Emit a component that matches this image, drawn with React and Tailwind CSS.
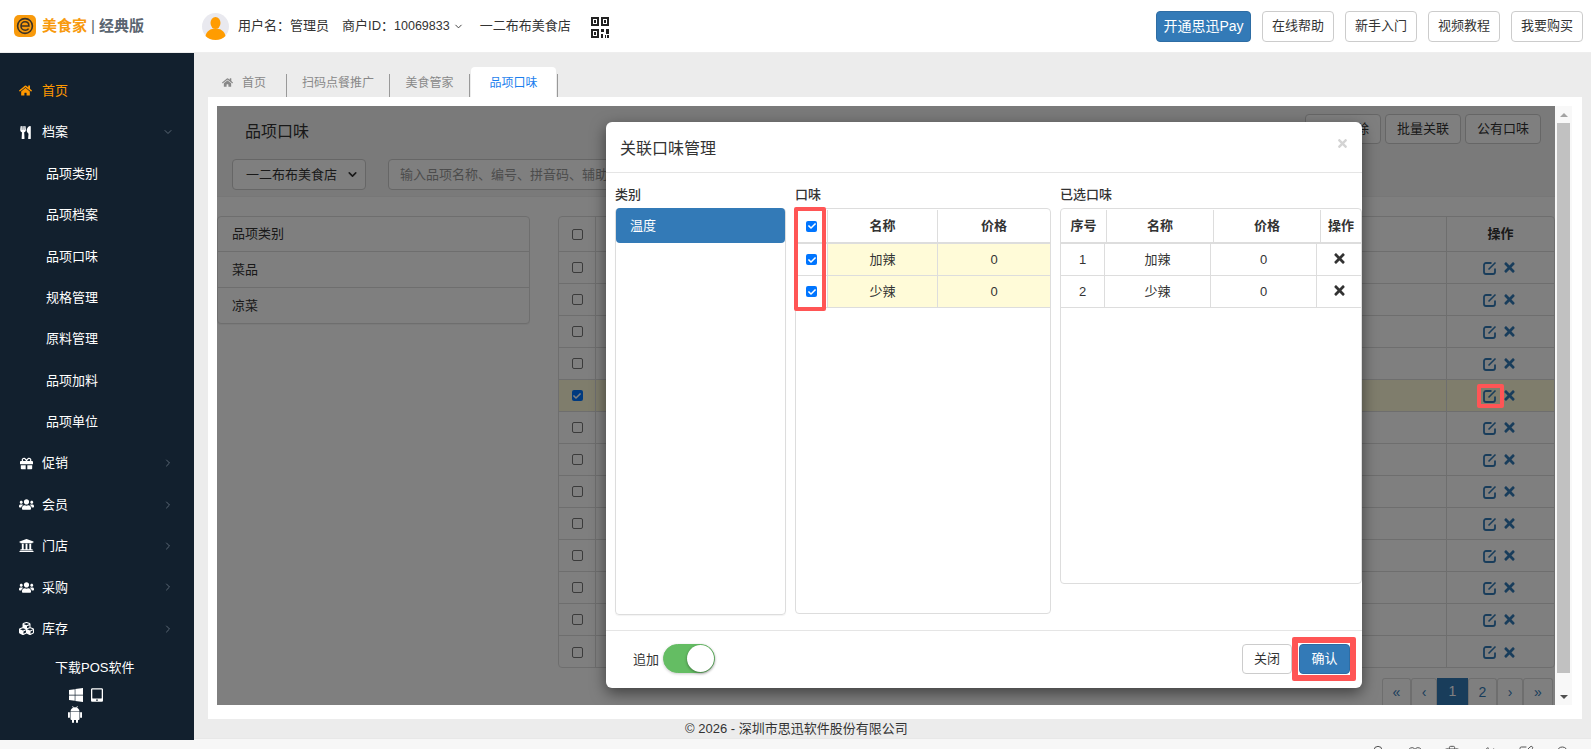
import React from "react";
import {
  FaHome,
  FaUtensils,
  FaGift,
  FaUsers,
  FaUniversity,
  FaCubes,
  FaWindows,
  FaTabletAlt,
  FaTimes,
  FaCheck,
} from "react-icons/fa";
import { ChevronDown, ChevronRight, Bell, Heart, Trash2, Volume2, SquarePen, Search } from "lucide-react";

const fontStack = "font-['Liberation_Sans','Noto_Sans_CJK_SC',sans-serif]";

const topButtons = ["在线帮助", "新手入门", "视频教程", "我要购买"];

const subItems = ["品项类别", "品项档案", "品项口味", "规格管理", "原料管理", "品项加料", "品项单位"];

const lowerMenu = [
  { label: "促销", icon: FaGift, size: "w-[13px] h-[13px] mx-[1px]" },
  { label: "会员", icon: FaUsers, size: "w-[15px] h-[15px]" },
  { label: "门店", icon: FaUniversity, size: "w-[15px] h-[15px]" },
  { label: "采购", icon: FaUsers, size: "w-[15px] h-[15px]" },
  { label: "库存", icon: FaCubes, size: "w-[15px] h-[15px]" },
];

const rows = Array.from({ length: 13 }, (_, i) => i);

function Logo() {
  return (
    <svg width="22" height="22" viewBox="0 0 22 22" className="shrink-0">
      <rect width="22" height="22" rx="5" fill="#f89a0c" />
      <circle cx="11" cy="11" r="7.4" fill="none" stroke="#3c3326" strokeWidth="1.6" />
      <path d="M6.500 11h8.400c0-2.600-1.700-4.200-3.900-4.200S7 8.600 7 11s1.800 4.300 4.200 4.300c1.500 0 2.600-.6 3.400-1.700" fill="none" stroke="#3c3326" strokeWidth="1.6" />
    </svg>
  );
}

function Avatar() {
  return (
    <svg width="27" height="27" viewBox="0 0 27 27" className="shrink-0">
      <circle cx="13.500" cy="13.500" r="13.500" fill="#e9e9ef" />
      <ellipse cx="13.500" cy="10" rx="5" ry="6" fill="#ff9c00" />
      <path d="M3.500 23c1-5 5-7.500 10-7.500s9 2.500 10 7.500c-2.500 2.600-6 4-10 4s-7.500-1.400-10-4z" fill="#ff9c00" />
    </svg>
  );
}

function QrIcon() {
  return (
    <svg width="18" height="21" viewBox="0 0 18 21" className="shrink-0">
      <g fill="none" stroke="#222" strokeWidth="2">
        <rect x="1" y="1" width="6" height="7" />
        <rect x="11" y="1" width="6" height="7" />
        <rect x="1" y="13" width="6" height="7" />
      </g>
      <path d="M10 12h3v3h-3zM15 12h3v5h-3zM10 17h2v4h-2zM14 18h1v3h-1zM16 18h2v3h-2z" fill="#222" />
      <path d="M3 3h2v3H3zM13 3h2v3h-2zM3 15h2v3H3z" fill="#222" />
    </svg>
  );
}

function AndroidIcon() {
  return (
    <svg width="14" height="17" viewBox="0 0 14 17" fill="white" className="-ml-[0.5px]">
      <path d="M2.500 5.400C2.600 3 4.500 1.300 7 1.300s4.400 1.700 4.500 4.100z" />
      <path d="M4.500 0l1 2M9.500 0l-1 2" stroke="white" strokeWidth=".7" />
      <path d="M2.500 6h9v7a1 1 0 0 1-1 1H3.500a1 1 0 0 1-1-1z" />
      <rect x="0" y="6" width="1.900" height="6" rx=".95" />
      <rect x="12.100" y="6" width="1.900" height="6" rx=".95" />
      <rect x="4" y="13" width="2" height="4" rx="1" />
      <rect x="8" y="13" width="2" height="4" rx="1" />
    </svg>
  );
}

function EditIcon() {
  return (
    <svg width="14" height="14" viewBox="0 0 14 14" fill="none" stroke="currentColor" strokeWidth="1.800">
      <path d="M8.500 2H3a2 2 0 0 0-2 2v7a2 2 0 0 0 2 2h7a2 2 0 0 0 2-2V7.500" />
      <path d="M5.500 8.500L12.500 1.500" strokeWidth="1.600" />
    </svg>
  );
}

function Header() {
  return (
    <header className="h-[53px] shrink-0 flex items-center bg-white border-b border-[#eeeeee] pl-[14px] pr-2">
      <Logo />
      <div className="ml-[6px] w-[160px] flex items-center text-[15px] font-bold">
        <span className="text-[#f89a0c]">美食家</span>
        <span className="mx-[4px] text-[#5a6570] font-normal">|</span>
        <span className="text-[#5a6570]">经典版</span>
      </div>
      <Avatar />
      <div className="ml-[9px] flex items-center text-[13px] text-[#333333]">
        <span>用户名：管理员</span>
        <span className="ml-[13px]">商户ID：<span className="text-[12.5px]">10069833</span></span>
        <ChevronDown className="ml-[3px] w-[11px] h-[11px]" />
        <span className="ml-[16px]">一二布布美食店</span>
      </div>
      <div className="ml-[20px] mt-[2px]">
        <QrIcon />
      </div>
      <div className="ml-auto flex gap-[11px]">
        <button className="h-[31px] w-[95px] rounded bg-[#337ab7] border border-[#2e6da4] text-white text-[14px]">开通思迅Pay</button>
        {topButtons.map((b) => (
          <button key={b} className="h-[31px] w-[72px] rounded bg-white border border-[#cccccc] text-[#333333] text-[13px]">
            {b}
          </button>
        ))}
      </div>
    </header>
  );
}

function Sidebar() {
  return (
    <aside className="w-[194px] shrink-0 bg-[#12202e] text-white text-[13px] pt-[17px]">
      <div className="h-[41.400px] flex items-center pl-[19px] text-[#ff9800]">
        <FaHome className="w-[13px] h-[13px]" />
        <span className="ml-[10px]">首页</span>
      </div>
      <div className="h-[41.400px] flex items-center pl-[19px]">
        <FaUtensils className="w-[13px] h-[13px]" />
        <span className="ml-[10px]">档案</span>
        <ChevronDown className="ml-auto mr-[20px] w-[12px] h-[12px] text-[#5b6875]" />
      </div>
      {subItems.map((s) => (
        <div key={s} className="h-[41.400px] flex items-center pl-[46px]">
          {s}
        </div>
      ))}
      {lowerMenu.map((m) => (
        <div key={m.label} className="h-[41.400px] flex items-center pl-[19px]">
          <m.icon className={m.size} />
          <span className="ml-[8px]">{m.label}</span>
          <ChevronRight className="ml-auto mr-[20px] w-[12px] h-[12px] text-[#5b6875]" />
        </div>
      ))}
      <div className="pl-[55px] mt-[9px]">下载POS软件</div>
      <div className="pl-[68px] mt-[9px] flex flex-wrap w-[110px] gap-x-[7px] gap-y-[3px]">
        <FaWindows className="w-[16px] h-[16px]" />
        <FaTabletAlt className="w-[12px] h-[16px]" />
        <AndroidIcon />
      </div>
    </aside>
  );
}

function Tabs() {
  return (
    <div className="h-[44px] shrink-0 pt-[14px] pl-[14px] flex items-stretch text-[12px] text-[#888888]">
      <div className="w-[79px] mt-[7px] flex items-center pl-[14px] border-r border-[#999999]">
        <FaHome className="w-[11px] h-[11px] -mt-[6px]" />
        <span className="ml-[9px] -mt-[6px]">首页</span>
      </div>
      <div className="w-[103px] mt-[7px] flex items-center justify-center border-r border-[#999999]">
        <span className="-mt-[6px]">扫码点餐推广</span>
      </div>
      <div className="w-[80px] mt-[7px] flex items-center justify-center border-r border-[#999999]">
        <span className="-mt-[6px]">美食管家</span>
      </div>
      <div className="ml-[1px] w-[85px] bg-white rounded-t-[4px] flex items-center justify-center text-[#1d7fee] pt-[1px]">品项口味</div>
      <div className="ml-[1px] mt-[7px] border-r border-[#999999]" />
    </div>
  );
}

function PageContent() {
  return (
    <div className="w-[1338px] h-[599px] bg-white text-[13px] text-[#333333]">
      <div className="h-[91px] bg-[#f5f5f5] border-b border-[#eeeeee] relative">
        <div className="absolute left-[28px] top-[15px] text-[16px] leading-[22px]">品项口味</div>
        <div className="absolute right-[14px] top-[8px] flex gap-[4px]">
          {["批量删除", "批量关联", "公有口味"].map((b) => (
            <button key={b} className="w-[76px] h-[30px] rounded bg-white border border-[#cccccc]">
              {b}
            </button>
          ))}
        </div>
        <div className="absolute left-[15px] top-[53px] flex gap-[22px]">
          <div className="w-[134px] h-[31px] rounded bg-white border border-[#cccccc] flex items-center pl-[13px] pr-[6px]">
            <span>一二布布美食店</span>
            <ChevronDown className="ml-auto w-[13px] h-[13px]" strokeWidth={3} />
          </div>
          <div className="w-[400px] h-[31px] rounded bg-white border border-[#cccccc] flex items-center pl-[11px] text-[#999999]">
            输入品项名称、编号、拼音码、辅助码
          </div>
        </div>
      </div>
      <div className="flex pt-[19px]">
        <div className="w-[313px] h-[108px] bg-white border border-[#dddddd] rounded shadow-[0_1px_1px_rgba(0,0,0,0.05)]">
          <div className="h-[35px] flex items-center pl-[14px] border-b border-[#dddddd]">品项类别</div>
          <div className="h-[36px] flex items-center pl-[14px] border-b border-[#dddddd]">菜品</div>
          <div className="h-[35px] flex items-center pl-[14px]">凉菜</div>
        </div>
        <div className="ml-[28px] flex-1 h-[452px] border border-[#dddddd] rounded bg-white">
          <div className="h-[35px] flex items-center border-b border-[#dddddd]">
            <div className="w-[37px] h-full flex items-center justify-center border-r border-[#dddddd]">
              <span className="w-[11px] h-[11px] rounded-[2px] border border-[#767676] bg-white" />
            </div>
            <div className="flex-1" />
            <div className="w-[108px] h-full flex items-center justify-center border-l border-[#dddddd] font-bold">操作</div>
          </div>
          {rows.map((i) => (
            <div key={i} className={`h-[32px] flex items-center ${i < 12 ? "border-b border-[#dddddd]" : ""} ${i === 4 ? "bg-[#fffbd8]" : ""}`}>
              <div className="w-[37px] h-full flex items-center justify-center border-r border-[#dddddd]">
                {i === 4 ? (
                  <span className="w-[11px] h-[11px] rounded-[2px] bg-[#0075ff] flex items-center justify-center">
                    <FaCheck className="w-[8px] h-[8px] text-white" />
                  </span>
                ) : (
                  <span className="w-[11px] h-[11px] rounded-[2px] border border-[#767676] bg-white" />
                )}
              </div>
              <div className="flex-1" />
              <div className="w-[108px] h-full flex items-center pl-[36px] border-l border-[#dddddd] text-[#337ab7]">
                <EditIcon />
                <FaTimes className="ml-[5px] w-[15px] h-[15px]" />
              </div>
            </div>
          ))}
        </div>
      </div>
      <div className="mt-[10px] ml-[1165px] h-[27px] overflow-hidden flex text-[#337ab7] text-[14px]">
        {[
          ["«", "w-[29px]"],
          ["‹", "w-[26px]"],
          ["1", "w-[31px]"],
          ["2", "w-[29px]"],
          ["›", "w-[26px]"],
          ["»", "w-[30px]"],
        ].map(([t, w]) =>
          t === "1" ? (
            <div key={t} className={`${w} h-[27px] flex items-center justify-center bg-[#337ab7] text-white`}>{t}</div>
          ) : (
            <div key={t} className={`${w} h-[27px] flex items-center justify-center bg-white border-x border-t border-[#dddddd] rounded-t-[3px]`}>{t}</div>
          )
        )}
      </div>
    </div>
  );
}

function Modal() {
  return (
    <div className="absolute left-[389px] top-[16px] w-[756px] h-[566px] bg-white rounded-[6px] shadow-[0_5px_15px_rgba(0,0,0,0.5)] overflow-hidden flex flex-col text-[13px] text-[#333333]">
      <div className="h-[51px] shrink-0 flex items-center pl-[14px] pr-[13px] border-b border-[#e5e5e5]">
        <span className="text-[16px] mt-[3px]">关联口味管理</span>
        <FaTimes className="ml-auto w-[13px] h-[13px] text-[#d4d4d4] -mt-[8px]" />
      </div>
      <div className="h-[458px] shrink-0 flex gap-[9px] pl-[9px] border-b border-[#e5e5e5]">
        <div className="w-[171px] shrink-0">
          <div className="h-[35px] flex items-end pb-[4px] font-medium">类别</div>
          <div className="h-[407px] border border-[#dddddd] rounded-[4px] shadow-[0_1px_1px_rgba(0,0,0,0.05)]">
            <div className="h-[35px] -mt-px bg-[#337ab7] text-white rounded-[4px] flex items-center pl-[14px]">温度</div>
          </div>
        </div>
        <div className="w-[256px] shrink-0">
          <div className="h-[35px] flex items-end pb-[4px] font-medium">口味</div>
          <div className="h-[406px] border border-[#dddddd] rounded-[4px] overflow-hidden">
            <div className="h-[35px] pt-px flex font-bold border-b-2 border-[#dddddd]">
              <div className="w-[31px] flex items-center justify-center">
                <span className="w-[11px] h-[11px] rounded-[2px] bg-[#0075ff] flex items-center justify-center">
                  <FaCheck className="w-[8px] h-[8px] text-white" />
                </span>
              </div>
              <div className="flex-1 flex items-center justify-center border-l border-[#dddddd]">名称</div>
              <div className="w-[113px] flex items-center justify-center border-l border-[#dddddd]">价格</div>
            </div>
            {["加辣", "少辣"].map((n) => (
              <div key={n} className="h-[32px] flex bg-[#fffbd8] border-b border-[#dddddd]">
                <div className="w-[31px] flex items-center justify-center bg-white">
                  <span className="w-[11px] h-[11px] rounded-[2px] bg-[#0075ff] flex items-center justify-center">
                    <FaCheck className="w-[8px] h-[8px] text-white" />
                  </span>
                </div>
                <div className="flex-1 flex items-center justify-center border-l border-[#dddddd]">{n}</div>
                <div className="w-[113px] flex items-center justify-center border-l border-[#dddddd]">0</div>
              </div>
            ))}
          </div>
        </div>
        <div className="w-[302px] shrink-0">
          <div className="h-[35px] flex items-end pb-[4px] font-medium">已选口味</div>
          <div className="h-[376px] border border-[#dddddd] rounded-[4px] overflow-hidden">
            <div className="h-[35px] pt-px flex font-bold border-b-2 border-[#dddddd]">
              <div className="w-[45px] flex items-center justify-center">序号</div>
              <div className="w-[107px] flex items-center justify-center border-l border-[#dddddd]">名称</div>
              <div className="w-[107px] flex items-center justify-center border-l border-[#dddddd]">价格</div>
              <div className="flex-1 flex items-center justify-center border-l border-[#dddddd]">操作</div>
            </div>
            {["加辣", "少辣"].map((n, i) => (
              <div key={n} className="h-[32px] flex border-b border-[#dddddd]">
                <div className="w-[43px] flex items-center justify-center">{i + 1}</div>
                <div className="w-[106px] flex items-center justify-center border-l border-[#dddddd]">{n}</div>
                <div className="w-[106px] flex items-center justify-center border-l border-[#dddddd]">0</div>
                <div className="flex-1 flex items-center justify-center border-l border-[#dddddd]">
                  <FaTimes className="w-[15px] h-[15px] -mt-[3px] text-[#333333]" />
                </div>
              </div>
            ))}
          </div>
        </div>
      </div>
      <div className="flex-1 flex items-start pt-[13px] pl-[27px] pr-[12px]">
        <span className="mt-[6px]">追加</span>
        <div className="ml-[4px] w-[52px] h-[29px] rounded-full bg-[#64bd63] border border-[#64bd63] flex justify-end shadow-[0_1px_3px_rgba(0,0,0,0.2)]">
          <span className="w-[27px] h-[27px] rounded-full bg-white shadow-[0_1px_3px_rgba(0,0,0,0.4)]" />
        </div>
        <button className="ml-auto w-[50px] h-[30px] rounded border border-[#cccccc] bg-white">关闭</button>
        <button className="ml-[7px] w-[51px] h-[30px] rounded border border-[#2e6da4] bg-[#337ab7] text-white">确认</button>
      </div>
    </div>
  );
}

function Scrollbar() {
  return (
    <div className="w-[17px] h-[599px] bg-[#f8f8f8] flex flex-col items-center">
      <div className="h-[17px] flex items-center justify-center">
        <span className="border-x-[4px] border-x-transparent border-b-[4px] border-b-[#a3a3a3]" />
      </div>
      <div className="w-[13px] h-[550px] bg-[#c1c1c1]" />
      <div className="mt-auto h-[17px] flex items-center justify-center">
        <span className="border-x-[4px] border-x-transparent border-t-[4px] border-t-[#505050]" />
      </div>
    </div>
  );
}

export default function App() {
  return (
    <div className={`relative w-[1591px] h-[749px] overflow-hidden flex flex-col bg-[#f7f7f7] ${fontStack}`}>
      <Header />
      <div className="h-[687px] shrink-0 flex">
        <Sidebar />
        <main className="flex-1 min-w-0 flex flex-col">
          <div className="h-[685px] shrink-0 bg-[#ececec] flex flex-col">
            <Tabs />
            <div className="ml-[14px] w-[1374px] h-[622px] shrink-0 bg-white p-[9px] pb-[14px] flex">
              <div className="relative w-[1338px] h-[599px] overflow-hidden">
                <PageContent />
                <div className="absolute inset-0 bg-black/50" />
                <Modal />
              </div>
              <Scrollbar />
            </div>
            <div className="flex-1 flex items-center pl-[491px] text-[13px] text-[#333333]">© 2026 - 深圳市思迅软件股份有限公司</div>
          </div>
        </main>
      </div>
      <div className="absolute bottom-0 left-[194px] right-0 h-[11px] border-t border-[#e8e8e8] bg-[#f7f7f7] overflow-hidden">
        <div className="absolute top-[6px] right-[20px] flex gap-[21px] text-[#555555]">
          <Bell className="w-[16px] h-[16px]" strokeWidth={1.5} />
          <Heart className="w-[16px] h-[16px]" strokeWidth={1.5} />
          <Trash2 className="w-[16px] h-[16px]" strokeWidth={1.5} />
          <Volume2 className="w-[16px] h-[16px]" strokeWidth={1.5} />
          <SquarePen className="w-[16px] h-[16px]" strokeWidth={1.5} />
          <Search className="w-[16px] h-[16px]" strokeWidth={1.5} />
        </div>
      </div>
      {/* red annotation boxes */}
      <div className="absolute left-[794px] top-[207px] w-[32px] h-[104px] border-[4px] border-[#ff5555] rounded-[2px]" />
      <div className="absolute left-[1477px] top-[384px] w-[27px] h-[24px] border-[4px] border-[#ff5555] rounded-[2px]" />
      <div className="absolute left-[1292px] top-[637px] w-[64px] h-[44px] border-[6px] border-[#ff5555] rounded-[2px]" />
    </div>
  );
}
